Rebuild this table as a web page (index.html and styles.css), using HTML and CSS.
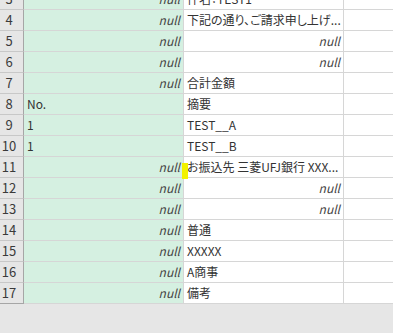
FILE: index.html
```html
<!DOCTYPE html>
<html lang="ja">
<head>
<meta charset="utf-8">
<link rel="stylesheet" href="styles.css">
</head>
<body>
<div class="sheet">
  <div class="row"><div class="rh">3</div><div class="c g nul">null</div><div class="c">件名：TEST1</div><div class="c e"></div></div>
  <div class="row"><div class="rh">4</div><div class="c g nul">null</div><div class="c">下記の通り、ご請求申し上げ...</div><div class="c e"></div></div>
  <div class="row"><div class="rh">5</div><div class="c g nul">null</div><div class="c nul">null</div><div class="c e"></div></div>
  <div class="row"><div class="rh">6</div><div class="c g nul">null</div><div class="c nul">null</div><div class="c e"></div></div>
  <div class="row"><div class="rh">7</div><div class="c g nul">null</div><div class="c">合計金額</div><div class="c e"></div></div>
  <div class="row"><div class="rh">8</div><div class="c g">No.</div><div class="c">摘要</div><div class="c e"></div></div>
  <div class="row"><div class="rh">9</div><div class="c g">1</div><div class="c">TEST__A</div><div class="c e"></div></div>
  <div class="row"><div class="rh">10</div><div class="c g">1</div><div class="c">TEST__B</div><div class="c e"></div></div>
  <div class="row"><div class="rh">11</div><div class="c g nul">null</div><div class="c">お振込先 三菱UFJ銀行 XXX...</div><div class="c e"></div></div>
  <div class="row"><div class="rh">12</div><div class="c g nul">null</div><div class="c nul">null</div><div class="c e"></div></div>
  <div class="row"><div class="rh">13</div><div class="c g nul">null</div><div class="c nul">null</div><div class="c e"></div></div>
  <div class="row"><div class="rh">14</div><div class="c g nul">null</div><div class="c">普通</div><div class="c e"></div></div>
  <div class="row"><div class="rh">15</div><div class="c g nul">null</div><div class="c">XXXXX</div><div class="c e"></div></div>
  <div class="row"><div class="rh">16</div><div class="c g nul">null</div><div class="c">A商事</div><div class="c e"></div></div>
  <div class="row last"><div class="rh">17</div><div class="c g nul">null</div><div class="c">備考</div><div class="c e"></div></div>
</div>
<div class="marker"></div>
</body>
</html>
```
FILE: styles.css
```css
html, body {
  margin: 0;
  padding: 0;
  width: 393px;
  height: 333px;
  overflow: hidden;
  background: #e6e6e6;
  font-family: "Noto Sans CJK JP", sans-serif;
  font-size: 12px;
  color: #333;
  font-feature-settings: "palt";
}
.sheet {
  margin-top: -11px;
}
.row {
  display: grid;
  grid-template-columns: 24px 160px 160px 1fr;
  height: 21px;
}
.rh {
  box-sizing: border-box;
  height: 21px;
  background: #e6e6e6;
  border-right: 1px solid #a6a6a6;
  border-bottom: 1px solid #c8c8c8;
  font-size: 13px;
  line-height: 20px;
  text-align: center;
  padding-right: 5px;
  color: #3a3a3a;
}
.last .rh {
  border-bottom-color: #a6a6a6;
}
.c {
  box-sizing: border-box;
  height: 21px;
  background: #fff;
  border-right: 1px solid #d6d6d6;
  border-bottom: 1px solid #d6d6d6;
  line-height: 20px;
  padding: 0 3px;
  white-space: nowrap;
  overflow: hidden;
}
.c.g {
  background: #d5f0e1;
}
.c.e {
  border-right: none;
}
.nul {
  font-style: italic;
  text-align: right;
  color: #444;
  padding-right: 3px;
}
.marker {
  position: absolute;
  left: 182px;
  top: 163px;
  width: 6px;
  height: 16px;
  background: #f2f200;
}
```
